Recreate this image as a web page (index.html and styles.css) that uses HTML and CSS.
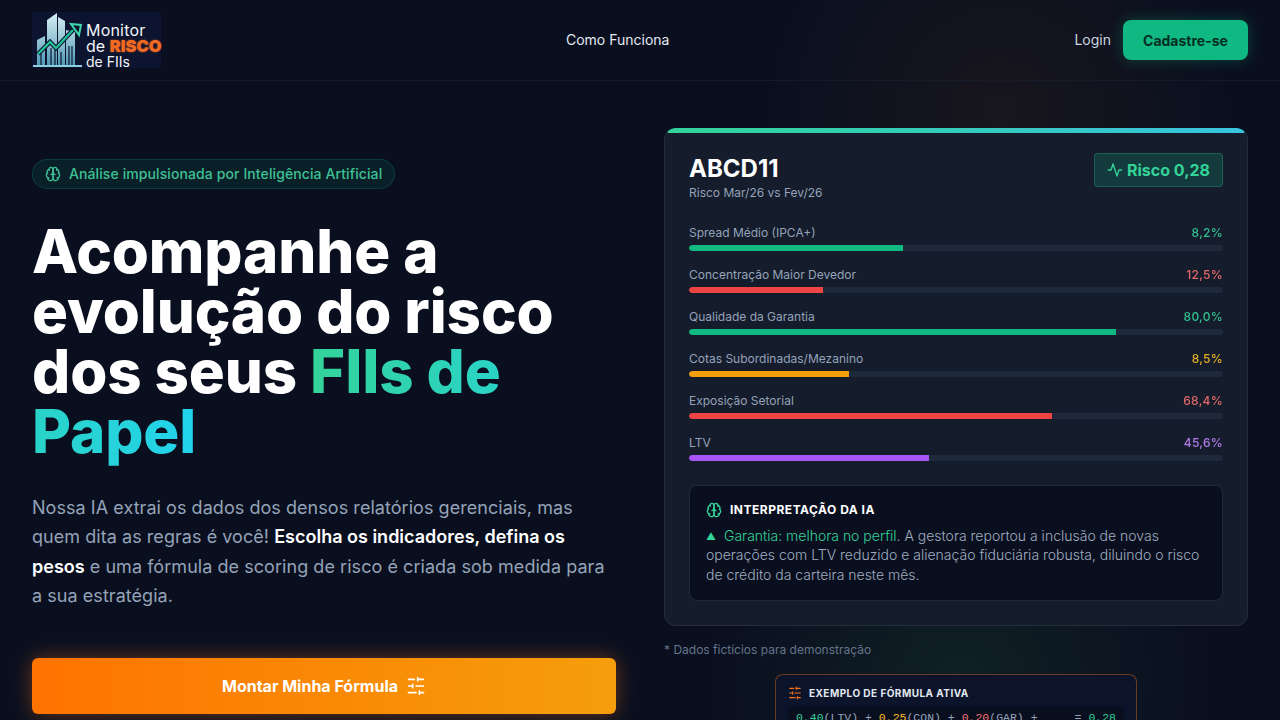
FILE: index.html
```html
<!DOCTYPE html>
<html lang="pt-BR">
<head>
  <meta charset="UTF-8">
  <title>Monitor de Risco de FIIs</title>
  <link rel="stylesheet" href="styles.css">
</head>
<body>

  <svg class="icon-defs" width="0" height="0">
    <symbol id="i-brain" viewBox="0 0 24 24">
      <path d="M12 5a3 3 0 1 0-5.997.125 4 4 0 0 0-2.526 5.77 4 4 0 0 0 .556 6.588A4 4 0 1 0 12 18Z"/>
      <path d="M12 5a3 3 0 1 1 5.997.125 4 4 0 0 1 2.526 5.77 4 4 0 0 1-.556 6.588A4 4 0 1 1 12 18Z"/>
      <path d="M15 13a4.5 4.5 0 0 1-3-4 4.5 4.5 0 0 1-3 4"/>
      <path d="M17.6 6.5a3 3 0 0 0 .4-1.4"/>
      <path d="M6 5.1a3 3 0 0 0 .4 1.4"/>
      <path d="M3.5 10.9a4 4 0 0 1 .6-.4"/>
      <path d="M19.9 10.5a4 4 0 0 1 .6.4"/>
      <path d="M6 18a4 4 0 0 1-2-.5"/>
      <path d="M20 17.5a4 4 0 0 1-2 .5"/>
    </symbol>
    <symbol id="i-sliders" viewBox="0 0 24 24">
      <path d="M21 4h-7M10 4H3M21 12h-9M8 12H3M21 20h-5M12 20H3M14 2v4M8 10v4M16 18v4"/>
    </symbol>
    <symbol id="i-activity" viewBox="0 0 24 24">
      <path d="M22 12h-4l-3 9L9 3l-3 9H2"/>
    </symbol>
  </svg>

  <!-- HEADER -->
  <header class="site-header">
    <a class="logo" href="#">
      <svg class="logo-mark" viewBox="0 0 52 56" width="52" height="56">
        <defs>
          <linearGradient id="tower" x1="0" y1="0" x2="0" y2="1">
            <stop offset="0" stop-color="#d8f0f5"/>
            <stop offset="1" stop-color="#4f98b4"/>
          </linearGradient>
        </defs>
        <path fill="url(#tower)" d="M5 54V28l8-4v30zM15 54V8l10-7v53zM26 54V5l7 4v45zM34 54V18l9 2v34z"/>
        <path fill="none" stroke="#0c1430" stroke-width="1.2" d="M9 54V40M19 54V36M23 54V36M29 54V40M37 54V34M40 54V34"/>
        <path fill="#8ccfe0" d="M1 53h49v2H1z"/>
        <path fill="none" stroke="#0c1430" stroke-width="4.5" d="M6 42l12-12 6 6 17-18"/>
        <path fill="none" stroke="#22c196" stroke-width="2.4" d="M6 42l12-12 6 6 17-18"/>
        <path fill="#0c1430" stroke="#3fd8aa" stroke-width="2" d="M39 12l10 1-2 10z"/>
      </svg>
      <span class="logo-text">
        <span class="logo-line-1">Monitor</span>
        <span class="logo-line-2">de <b>RISCO</b></span>
        <span class="logo-line-3">de FIIs</span>
      </span>
    </a>
    <nav class="main-nav"><a href="#">Como Funciona</a></nav>
    <div class="header-actions">
      <a class="login" href="#">Login</a>
      <a class="btn-signup" href="#">Cadastre-se</a>
    </div>
  </header>

  <main class="hero">

    <!-- LEFT COLUMN -->
    <section class="hero-copy">
      <div class="ai-pill">
        <svg class="icon icon-16"><use href="#i-brain"/></svg>
        Análise impulsionada por Inteligência Artificial
      </div>
      <h1>Acompanhe a evolução do risco dos seus <span class="grad-text">FIIs de Papel</span></h1>
      <p class="lead">Nossa IA extrai os dados dos densos relatórios gerenciais, mas quem dita as regras é você! <strong>Escolha os indicadores, defina os pesos</strong> e uma fórmula de scoring de risco é criada sob medida para a sua estratégia.</p>
      <a class="btn-cta" href="#">
        Montar Minha Fórmula
        <svg class="icon icon-20"><use href="#i-sliders"/></svg>
      </a>
    </section>

    <!-- RIGHT COLUMN -->
    <section class="hero-demo">
      <div class="risk-card">
        <div class="card-head">
          <div>
            <h2>ABCD11</h2>
            <p class="card-sub">Risco Mar/26 vs Fev/26</p>
          </div>
          <div class="risk-badge">
            <svg class="icon icon-16"><use href="#i-activity"/></svg>
            Risco 0,28
          </div>
        </div>

        <div class="metrics">
          <div class="metric">
            <div class="metric-label"><span>Spread Médio (IPCA+)</span><span class="val-green">8,2%</span></div>
            <div class="track"><div class="fill fill-green" style="width: 40%"></div></div>
          </div>
          <div class="metric">
            <div class="metric-label"><span>Concentração Maior Devedor</span><span class="val-red">12,5%</span></div>
            <div class="track"><div class="fill fill-red" style="width: 25%"></div></div>
          </div>
          <div class="metric">
            <div class="metric-label"><span>Qualidade da Garantia</span><span class="val-green">80,0%</span></div>
            <div class="track"><div class="fill fill-green" style="width: 80%"></div></div>
          </div>
          <div class="metric">
            <div class="metric-label"><span>Cotas Subordinadas/Mezanino</span><span class="val-yellow">8,5%</span></div>
            <div class="track"><div class="fill fill-yellow" style="width: 30%"></div></div>
          </div>
          <div class="metric">
            <div class="metric-label"><span>Exposição Setorial</span><span class="val-red">68,4%</span></div>
            <div class="track"><div class="fill fill-red" style="width: 68%"></div></div>
          </div>
          <div class="metric">
            <div class="metric-label"><span>LTV</span><span class="val-purple">45,6%</span></div>
            <div class="track"><div class="fill fill-purple" style="width: 45%"></div></div>
          </div>
        </div>

        <div class="ai-panel">
          <div class="ai-panel-title">
            <svg class="icon icon-16"><use href="#i-brain"/></svg>
            INTERPRETAÇÃO DA IA
          </div>
          <p><span class="val-green"><span class="arrow-up">▲</span>Garantia: melhora no perfil</span>. A gestora reportou a inclusão de novas operações com LTV reduzido e alienação fiduciária robusta, diluindo o risco de crédito da carteira neste mês.</p>
        </div>
      </div>

      <p class="demo-note">* Dados fictícios para demonstração</p>

      <div class="formula-box">
        <div class="formula-title">
          <svg class="icon icon-14"><use href="#i-sliders"/></svg>
          EXEMPLO DE FÓRMULA ATIVA
        </div>
        <div class="formula-code">
          <span><span class="val-green">0,40</span>(LTV) + <span class="val-yellow">0,25</span>(CON) + <span class="val-red">0,20</span>(GAR) +</span>
          <span>= <span class="val-green">0,28</span></span>
        </div>
      </div>
    </section>

  </main>

</body>
</html>
```

FILE: styles.css
```css
* {
  box-sizing: border-box;
}

html, body {
  height: 720px;
  overflow: hidden;
}

body {
  margin: 0;
  font-family: "Inter", "Liberation Sans", sans-serif;
  color: #fff;
  background:
    radial-gradient(circle at 1000px 110px, rgba(120, 70, 20, 0.13), transparent 230px),
    radial-gradient(circle at 960px 680px, rgba(40, 110, 60, 0.18), transparent 250px),
    #0a0f1f;
}

a {
  color: inherit;
  text-decoration: none;
}

.icon-defs {
  position: absolute;
}

.icon {
  fill: none;
  stroke: currentColor;
  stroke-width: 2;
  stroke-linecap: round;
  stroke-linejoin: round;
  flex: none;
}

.icon-14 { width: 14px; height: 14px; }
.icon-16 { width: 16px; height: 16px; }
.icon-20 { width: 20px; height: 20px; }

/* header */
.site-header {
  height: 81px;
  padding: 0 32px;
  display: flex;
  justify-content: space-between;
  align-items: center;
  border-bottom: 1px solid #141b2b;
}

.logo {
  width: 129px;
  height: 56px;
  display: flex;
  gap: 2px;
  background: #0c1430;
}

.logo-mark {
  flex: none;
}

.logo-text {
  display: flex;
  flex-direction: column;
  padding-top: 11px;
  line-height: 15.5px;
  color: #f1f5f9;
  white-space: nowrap;
}

.logo-line-1 { font-size: 16px; letter-spacing: 0.2px; }
.logo-line-2 { font-size: 16px; }
.logo-line-3 { font-size: 14px; }

.logo-text b {
  font-size: 16.5px;
  font-weight: 900;
  color: #f26a21;
  text-shadow: 0 0 2px rgba(242, 106, 33, 0.7);
}

.main-nav {
  margin-bottom: 2px;
  font-size: 14px;
  color: #e2e8f0;
}

.header-actions {
  display: flex;
  align-items: center;
  gap: 12px;
}

.login {
  margin-bottom: 2px;
  font-size: 14px;
  color: #cbd5e1;
}

.btn-signup {
  width: 125px;
  height: 40px;
  display: flex;
  align-items: center;
  justify-content: center;
  border-radius: 8px;
  background: #10b981;
  box-shadow: 0 0 15px rgba(16, 185, 129, 0.3);
  color: #052e23;
  font-size: 14px;
  font-weight: 700;
}

/* hero */
.hero {
  display: grid;
  grid-template-columns: 1fr 1fr;
  gap: 48px;
  padding: 47px 32px 0;
}

.hero-copy {
  padding-top: 31px;
}

.ai-pill {
  display: inline-flex;
  align-items: center;
  gap: 8px;
  height: 30px;
  padding: 0 12px 1px;
  border: 1px solid rgba(16, 185, 129, 0.2);
  border-radius: 999px;
  background: rgba(16, 185, 129, 0.1);
  color: #3ec095;
  font-size: 14px;
  font-weight: 500;
  letter-spacing: 0.1px;
}

h1 {
  margin: 32px 0;
  font-size: 60px;
  font-weight: 800;
  line-height: 60px;
  letter-spacing: -0.1px;
}

.grad-text {
  background: linear-gradient(90deg, #34d399, #22d3ee);
  -webkit-background-clip: text;
  background-clip: text;
  color: transparent;
}

.lead {
  margin: 0 0 48px;
  font-size: 18px;
  line-height: 29.25px;
  letter-spacing: 0.05px;
  color: #94a3b8;
}

.lead strong {
  color: #fff;
  font-weight: 600;
  letter-spacing: 0;
}

.btn-cta {
  height: 56px;
  display: flex;
  align-items: center;
  justify-content: center;
  gap: 8px;
  border-radius: 6px;
  background: linear-gradient(90deg, #ff7300, #f59e0b);
  box-shadow: 0 0 20px rgba(249, 115, 22, 0.4);
  font-size: 16px;
  font-weight: 700;
}

/* risk card */
.risk-card {
  padding: 24px;
  border: 1px solid #252c3c;
  border-top-color: transparent;
  border-radius: 12px;
  background:
    linear-gradient(90deg, #34d399, #38c5e0) top / 100% 5px no-repeat border-box,
    #151c2c;
}

.card-head {
  display: flex;
  justify-content: space-between;
  align-items: flex-start;
  margin-bottom: 24px;
}

h2 {
  margin: 0;
  font-size: 24px;
  font-weight: 700;
  line-height: 32px;
}

.card-sub {
  margin: 0;
  font-size: 12px;
  line-height: 16px;
  color: #94a3b8;
}

.risk-badge {
  height: 34px;
  display: flex;
  align-items: center;
  gap: 4px;
  padding: 0 12px;
  border: 1px solid rgba(52, 211, 153, 0.25);
  border-radius: 4px;
  background: rgba(16, 185, 129, 0.2);
  color: #34d399;
  font-size: 16px;
  font-weight: 700;
}

.metrics {
  display: flex;
  flex-direction: column;
  gap: 16px;
}

.metric-label {
  display: flex;
  justify-content: space-between;
  margin-bottom: 4px;
  font-size: 12px;
  line-height: 16px;
  color: #94a3b8;
}

.metric-label span:last-child {
  font-weight: 500;
  letter-spacing: 0.3px;
  opacity: 0.9;
}

.track {
  height: 6px;
  border-radius: 999px;
  background: #1e293b;
  overflow: hidden;
}

.fill {
  height: 100%;
  border-radius: 999px 0 0 999px;
}

.fill-green { background: #10b981; }
.fill-red { background: #ef4444; }
.fill-yellow { background: #f59e0b; }
.fill-purple { background: #a855f7; }

.val-green { color: #34d399; }
.val-red { color: #f87171; }
.val-yellow { color: #fbbf24; }
.val-purple { color: #c084fc; }

/* ai panel */
.ai-panel {
  margin-top: 24px;
  padding: 16px;
  border: 1px solid #1e293b;
  border-radius: 8px;
  background: #0a0f1f;
}

.ai-panel-title {
  display: flex;
  align-items: center;
  gap: 8px;
  margin-bottom: 8px;
  font-size: 12px;
  line-height: 16px;
  font-weight: 700;
  letter-spacing: 0.5px;
}

.ai-panel-title .icon {
  color: #34d399;
}

.ai-panel p {
  margin: 0;
  font-size: 14px;
  font-weight: 300;
  line-height: 19.25px;
  color: #a0aec0;
}

.arrow-up {
  display: inline-block;
  width: 18px;
  font-size: 10px;
  line-height: 0;
  vertical-align: 1px;
}

.demo-note {
  margin: 16px 0;
  font-size: 12px;
  line-height: 16px;
  color: #64748b;
}

/* formula box */
.formula-box {
  width: 362px;
  margin: 0 auto;
  padding: 11px 12px;
  border: 1px solid rgba(249, 115, 22, 0.4);
  border-radius: 8px;
  background: #0c142c;
}

.formula-title {
  display: flex;
  align-items: center;
  gap: 7px;
  margin-bottom: 6px;
  font-size: 10px;
  line-height: 14px;
  font-weight: 700;
  letter-spacing: 0.45px;
  color: #e2e8f0;
}

.formula-title .icon {
  color: #f97316;
}

.formula-code {
  display: flex;
  justify-content: space-between;
  padding: 4px 8px;
  border-radius: 4px;
  background: #0a0f1f;
  font-family: "Liberation Mono", monospace;
  font-size: 11.5px;
  line-height: 16px;
  color: #94a3b8;
}
```
